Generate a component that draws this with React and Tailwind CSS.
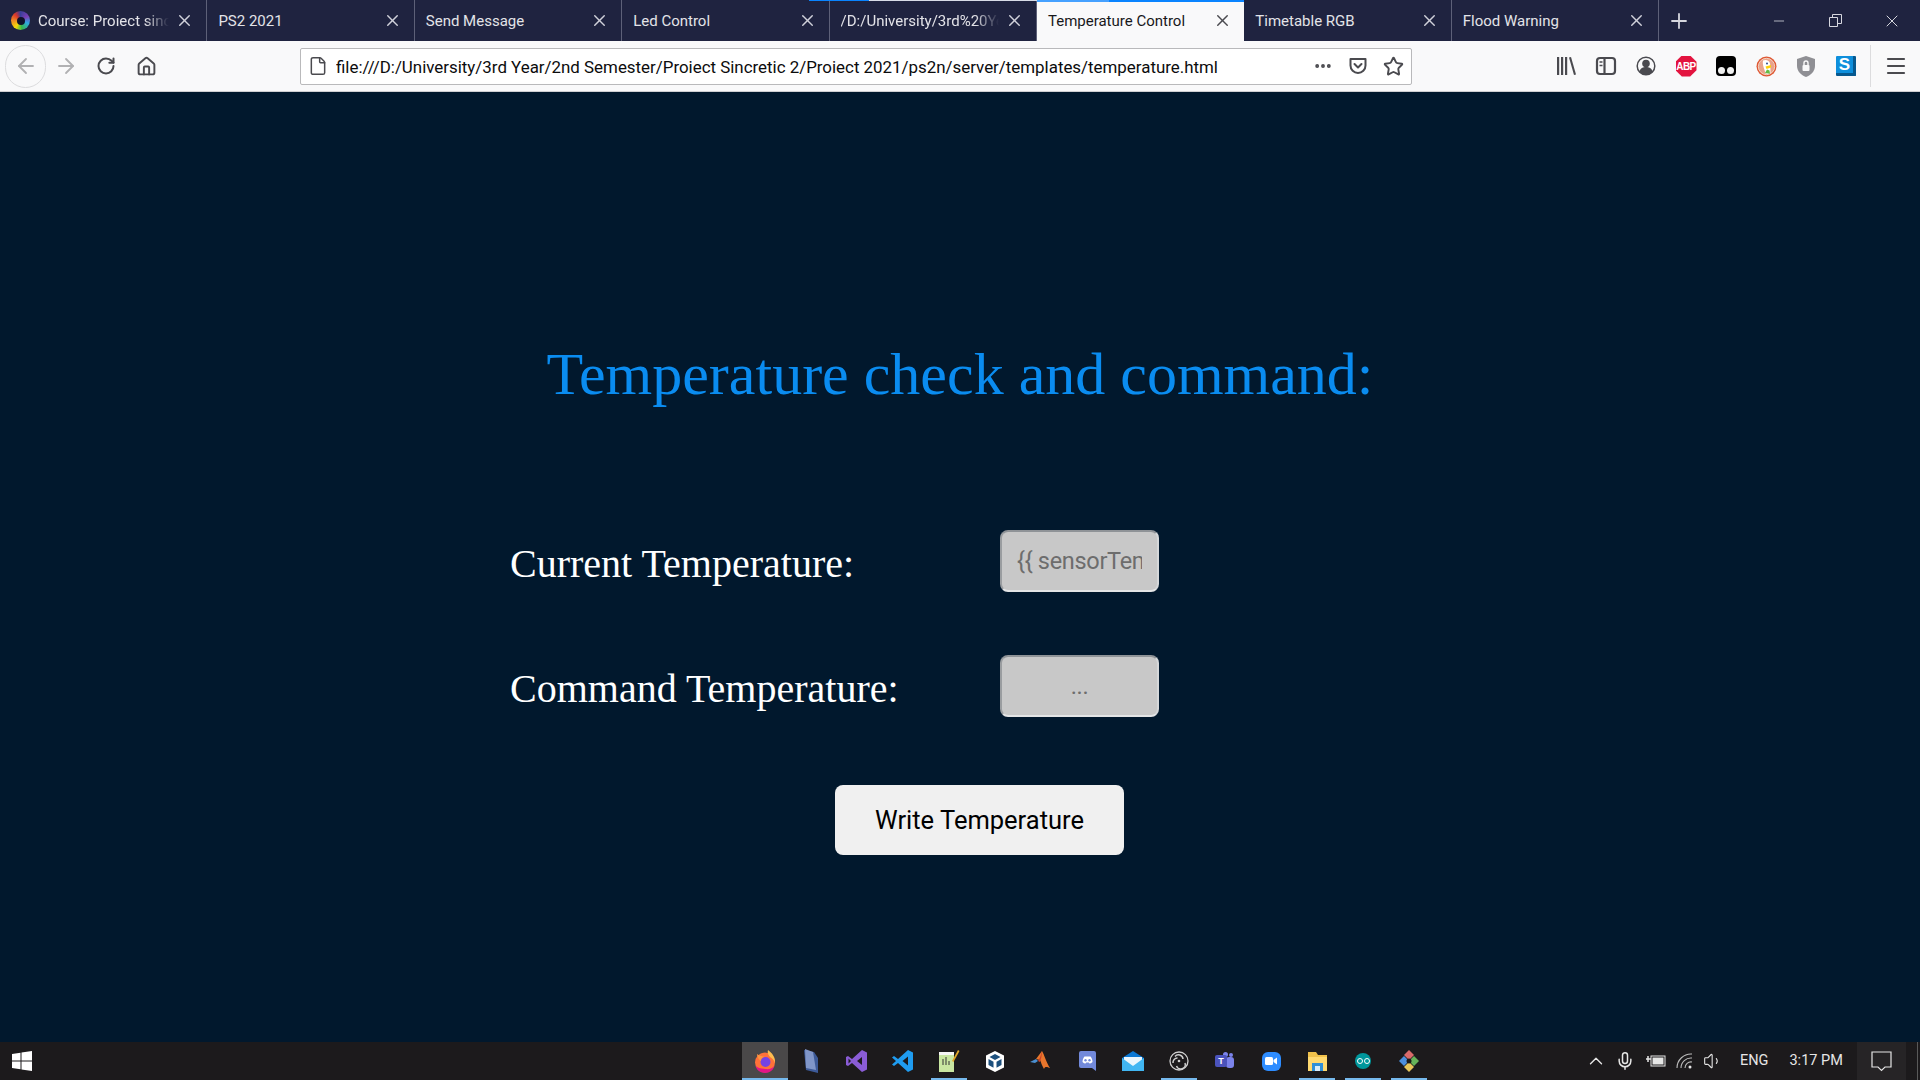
import { ArrowLeft, ArrowRight, RotateCw, Home, File, Ellipsis, Star, X, Plus, Minus, Menu, ChevronUp, Mic, Volume1 } from "lucide-react";

const uiFont = "font-['Roboto','Noto_Sans',sans-serif]";

const tabs = [
  { title: "Course: Proiect sincretic 2", icon: true },
  { title: "PS2 2021" },
  { title: "Send Message" },
  { title: "Led Control" },
  { title: "/D:/University/3rd%20Year/2nd" },
  { title: "Temperature Control", active: true },
  { title: "Timetable RGB" },
  { title: "Flood Warning" },
];

function Favicon() {
  return (
    <div className="w-[19px] h-[19px] shrink-0 mr-[8px] rounded-full flex items-center justify-center bg-[conic-gradient(#3a3f9a_0deg,#7c3fb5_60deg,#2fa8e0_110deg,#35b84a_170deg,#f5d90a_215deg,#f08a24_270deg,#d8352a_320deg,#3a3f9a_360deg)]">
      <div className="w-[8px] h-[8px] rounded-full bg-[#10132b]" />
    </div>
  );
}

function Tab({ tab, last }) {
  const long = tab.title.length > 22;
  return (
    <div className={`relative w-[207.400px] h-full flex items-center pl-[11px] pr-[12px] shrink-0 ${tab.active ? "bg-[#f9f9fa] text-[#18181a]" : "text-[#e3e3e8]"} ${!tab.active && !last ? "border-r border-[#5d6078]" : ""} ${last ? "border-r border-[#5d6078]" : ""}`}>
      {tab.icon && <Favicon />}
      <span className={`flex-1 whitespace-nowrap text-[15px] leading-none pt-[2px] ${long ? "overflow-hidden [mask-image:linear-gradient(to_left,transparent,black_24px)]" : ""}`}>{tab.title}</span>
      <X size={19} strokeWidth={1.800} className={`shrink-0 ml-[6px] ${tab.active ? "text-[#4a4a4f]" : "text-[#d0d1da]"}`} />
    </div>
  );
}

function TabStrip() {
  return (
    <div className="relative h-[41px] bg-[#1f2340] flex items-center">
      {tabs.map((t, i) => <Tab key={i} tab={t} last={i === tabs.length - 1} />)}
      <div className="w-[40px] flex justify-center shrink-0"><Plus size={24} strokeWidth={1.800} className="text-[#d6d7df]" /></div>
      <div className="flex-1 flex justify-end items-center text-[#d6d7df]">
        <div className="w-[57px] flex justify-center"><Minus size={16} strokeWidth={1.200} /></div>
        <div className="w-[57px] flex justify-center">
          <svg width="13" height="13" viewBox="0 0 13 13" fill="none" stroke="currentColor"><path d="M.5 3.500h8v9h-8zM3.500 3.500v-3h9v9h-4" /></svg>
        </div>
        <div className="w-[56px] flex justify-center"><X size={20} strokeWidth={1.200} /></div>
      </div>
      {/* loading bars along the top edge of the tabs */}
      <div className="absolute top-0 left-[809px] w-[60px] h-[1px] bg-[#0a84ff]" />
      <div className="absolute top-0 left-[869px] w-[168px] h-[1px] bg-[#d8dce8]" />
      <div className="absolute top-0 left-[1037px] w-[72px] h-[2px] bg-[#45a1ff]" />
      <div className="absolute top-0 left-[1109px] w-[135px] h-[2px] bg-[#0a84ff]" />
    </div>
  );
}

function ToolIcon({ children, w = "w-[40px]" }) {
  return <div className={`${w} flex items-center justify-center shrink-0`}>{children}</div>;
}

function Toolbar() {
  const grey = "text-[#4a4a4f]";
  return (
    <div className="h-[51px] bg-[#f9f9fa] border-b border-[#cfcfd2] flex items-center text-[14px]">
      <div className="w-[41px] h-[43px] ml-[5px] rounded-full border border-[#dcdcde] flex items-center justify-center shrink-0">
        <ArrowLeft size={24} strokeWidth={1.800} className="text-[#b1b1b3]" />
      </div>
      <ToolIcon><ArrowRight size={24} strokeWidth={1.800} className="text-[#b1b1b3]" /></ToolIcon>
      <ToolIcon><RotateCw size={20} strokeWidth={2.400} className={grey} /></ToolIcon>
      <ToolIcon><Home size={21} strokeWidth={2.200} className={grey} /></ToolIcon>
      <div className="ml-[134px] w-[1112px] h-[37px] bg-white border border-[#b9b9bb] rounded-[2px] flex items-center pl-[7px] pr-[7px] shrink-0">
        <File size={20} strokeWidth={1.800} className={`${grey} shrink-0`} />
        <span className="ml-[8px] flex-1 whitespace-nowrap overflow-hidden text-[#0c0c0d] text-[16.900px] pt-[3px]">file:///D:/University/3rd Year/2nd Semester/Proiect Sincretic 2/Proiect 2021/ps2n/server/templates/temperature.html</span>
        <Ellipsis size={20} strokeWidth={2.600} className={`${grey} mr-[15px] shrink-0`} />
        <svg width="20" height="20" viewBox="0 0 20 20" fill="none" stroke="#4a4a4f" strokeWidth="2" strokeLinejoin="round" strokeLinecap="round" className="mr-[15px] shrink-0">
          <path d="M2.500 3h15v6.500a7.500 7.500 0 0 1-15 0z" /><path d="M6.500 8l3.500 3.500L13.500 8" />
        </svg>
        <Star size={21} strokeWidth={2.200} className={`${grey} shrink-0`} />
      </div>
      <div className="ml-[134px] flex items-center">
        <ToolIcon>
          <svg width="22" height="22" viewBox="0 0 22 22" fill="#4a4a4f"><rect x="2" y="2" width="2.200" height="18" /><rect x="6" y="2" width="2.200" height="18" /><rect x="10" y="2" width="2.200" height="18" /><path d="M14 2.500l2-.5 5 17.500-2 .5z" /></svg>
        </ToolIcon>
        <ToolIcon>
          <svg width="22" height="20" viewBox="0 0 22 20" fill="none" stroke="#4a4a4f" strokeWidth="2.200"><rect x="2" y="2" width="18" height="16" rx="3" /><path d="M9.500 2v16" /><path d="M4.500 6h3M4.500 9.500h3" strokeWidth="1.500" /></svg>
        </ToolIcon>
        <ToolIcon>
          <svg width="20" height="20" viewBox="0 0 20 20"><circle cx="10" cy="10" r="8.800" fill="none" stroke="#4a4a4f" strokeWidth="1.500" /><circle cx="10" cy="7.500" r="3.800" fill="#4a4a4f" /><path d="M3.500 15.500c1-3.500 3.500-4.500 6.500-4.500s5.500 1 6.500 4.500a8 8 0 0 1-13 0z" fill="#4a4a4f" /></svg>
        </ToolIcon>
        <ToolIcon>
          <div className="w-[21px] h-[21px] bg-[#e3143f] [clip-path:polygon(30%_0,70%_0,100%_30%,100%_70%,70%_100%,30%_100%,0_70%,0_30%)] flex items-center justify-center text-white text-[10px] font-bold font-['Liberation_Sans',sans-serif] tracking-[-0.600px]">ABP</div>
        </ToolIcon>
        <ToolIcon>
          <div className="w-[20px] h-[20px] bg-black rounded-[4px] relative overflow-hidden">
            <span className="absolute left-[2px] bottom-[2px] w-[7px] h-[7px] rounded-full bg-[#f0f0f0]" />
            <span className="absolute right-[2px] bottom-[2px] w-[7px] h-[7px] rounded-full bg-[#f0f0f0]" />
          </div>
        </ToolIcon>
        <ToolIcon>
          <svg width="21" height="21" viewBox="0 0 21 21">
            <circle cx="10.500" cy="10.500" r="10" fill="#de5833" />
            <circle cx="10.500" cy="10.500" r="8.200" fill="#e9a38a" stroke="#f6e3d8" strokeWidth="0.800" />
            <path d="M7 4.500c3-1.500 6.500 0 7 3 .4 3 .5 6 .5 9.500-2 1.200-4 1.200-5 .5C9 14 6 9 7 4.500z" fill="#fff" />
            <path d="M9.500 10.500l5.500-1.500v2.500l-4.500 1.500z" fill="#fdd20a" />
            <path d="M9 17l2-3.500 2.500 1 .5 3.200z" fill="#65bc46" />
            <circle cx="11" cy="7.500" r="1" fill="#2d4f8e" />
          </svg>
        </ToolIcon>
        <ToolIcon>
          <svg width="18" height="21" viewBox="0 0 18 21"><path d="M9 0l9 3v7c0 5-4 9-9 11-5-2-9-6-9-11V3z" fill="#8f8f94" /><rect x="5.500" y="9" width="7" height="6" rx="1" fill="#f9f9fa" /><path d="M7 9V7a2 2 0 0 1 4 0v2" fill="none" stroke="#f9f9fa" strokeWidth="1.400" /></svg>
        </ToolIcon>
        <ToolIcon>
          <div className="w-[20px] h-[20px] bg-[#0e8fdc] rounded-[1px] border-b-[3px] border-r-[3px] border-[#07598f] flex items-center justify-center text-white text-[17px] font-bold font-['Liberation_Sans',sans-serif]">S</div>
        </ToolIcon>
      </div>
      <div className="ml-[4px] w-px h-[42px] bg-[#dcdcde] shrink-0" />
      <div className="flex-1 flex justify-center"><Menu size={24} strokeWidth={2.200} className={grey} /></div>
    </div>
  );
}

function Row({ label, value, center }) {
  return (
    <div className="flex items-center h-[62px]">
      <label className="w-[490px] text-[40px] leading-none text-white relative top-[3px]">{label}</label>
      <input
        readOnly
        value={value}
        className={`w-[159px] h-[62px] bg-[#c8c8c8] rounded-[8px] border-2 border-t-[#8f9397] border-l-[#9a9da0] border-r-[#d5d7d9] border-b-[#e4e5e6] text-[23.500px] tracking-[-0.300px] text-[#6d6d6d] outline-none ${uiFont} ${center ? "text-center" : "pl-[15px] pr-[15px]"}`}
      />
    </div>
  );
}

function Page() {
  return (
    <main className="h-[950px] bg-[#01182d] font-['Liberation_Serif',serif] pt-[247px]">
      <h1 className="text-center text-[60px] leading-[70px] text-[#0a8cf0]">Temperature check and command:</h1>
      <div className="w-[900px] mx-auto mt-[121px]">
        <Row label="Current Temperature:" value="{{ sensorTemp }}" />
        <div className="mt-[63px]"><Row label="Command Temperature:" value="..." center /></div>
        <button className={`block ml-[325px] mt-[68px] w-[289px] h-[70px] bg-[#f0f0f0] rounded-[8px] text-black text-[25.500px] ${uiFont}`}>Write Temperature</button>
      </div>
    </main>
  );
}

const taskIcons = [
  { key: "firefox", state: "hover", icon: (
    <svg width="24" height="24" viewBox="0 0 24 24">
      <circle cx="12" cy="13.500" r="10" fill="#ff7139" />
      <path d="M2.500 17a10 10 0 0 0 19 0c-3 3-6 3.500-9 3-4-.5-8-1-10-3z" fill="#e31587" />
      <circle cx="12.500" cy="13" r="5" fill="#7542e5" />
      <path d="M15 1c4 3 7.500 7 7 13-1-3-3-5-5-6-1-2-3-3-2-7z" fill="#ffbd4f" />
      <path d="M4 5c2 2 5 2 8 3-3 0-4 2-4 4-2-1-4-4-4-7z" fill="#ff9640" />
    </svg>
  ) },
  { key: "file", icon: <svg width="14" height="24" viewBox="0 0 14 24"><path d="M0 1l10 2 4 6v15L2 21z" fill="#3d5a98" /><path d="M1 0l8 3 3 18-10-2z" fill="#8096c9" /></svg> },
  { key: "vs", icon: <svg width="22" height="24" viewBox="0 0 22 24"><path d="M16 1l5 2.500v17L16 23 6 14l-4 3-2-1V8l2-1 4 3z" fill="#8a5cd6" /><path d="M16 8l-5 4 5 4zM2.500 9.500v5L5 12z" fill="#1c1a1c" /></svg> },
  { key: "vscode", icon: <svg width="22" height="24" viewBox="0 0 22 24"><path d="M16 1l5 2.500v17L16 23 6 14l-4 3-2-1.500L4 12 0 8.500 2 7l4 3z" fill="#1f9cf0" /><path d="M16 7.500L10.500 12l5.500 4.500z" fill="#1c1a1c" /></svg> },
  { key: "notepad", state: "open", icon: <svg width="22" height="24" viewBox="0 0 22 24"><path d="M1 3h15v20H1z" fill="#c9e6a1" /><path d="M1 3h15v3H1z" fill="#f5f5f5" /><path d="M5 16V10M8 16V8M11 16v-4" stroke="#333" strokeWidth="1" /><path d="M14 12l6-11 1.500 1-6 11z" fill="#e0a526" /></svg> },
  { key: "vbox", icon: <svg width="20" height="23" viewBox="0 0 20 23"><path d="M10 1l9 4.500v12L10 22l-9-4.500v-12z" fill="#fff" /><path d="M10 4l5.500 3-5.500 3-5.500-3zM3.500 9l5 2.800v6L3.500 15zM16.500 9l-5 2.800v6l5-2.800z" fill="#1c4f7d" /></svg> },
  { key: "matlab", icon: <svg width="22" height="20" viewBox="0 0 22 20"><path d="M0 11l6-3 2 2-3 2z" fill="#4b8fd0" /><path d="M6 8l6-8c2 3 5 13 8 17-3-1-5-2-6 1-2-3-3-7-4-9z" fill="#e8762c" /><path d="M12 0c-1 4-2 7-4 10l2 1c1-3 2-7 2-11z" fill="#c9412b" /></svg> },
  { key: "discord", icon: (
    <svg width="17" height="20" viewBox="0 0 17 20">
      <path d="M2 0h13a2 2 0 0 1 2 2v18l-4-3H2a2 2 0 0 1-2-2V2a2 2 0 0 1 2-2z" fill="#7289da" />
      <path d="M3.500 11c0-2.500 1-4.500 2-5.500h6c1 1 2 3 2 5.500-1 1-2 1.500-3 1.500l-.7-1H7.200l-.7 1c-1 0-2-.5-3-1.500z" fill="#fff" />
      <circle cx="6.500" cy="9.300" r="1.200" fill="#7289da" /><circle cx="10.500" cy="9.300" r="1.200" fill="#7289da" />
    </svg>
  ) },
  { key: "mail", icon: <svg width="22" height="20" viewBox="0 0 22 20"><path d="M0 7l11-7 11 7v13H0z" fill="#0a78d4" /><path d="M2 6h18v6l-9 4-9-4z" fill="#eaf6fd" /><path d="M0 7l11 8 11-8v13H0z" fill="#41b6f2" /></svg> },
  { key: "obs", state: "open", icon: (
    <svg width="20" height="20" viewBox="0 0 20 20" fill="none" stroke="#d0d0d0">
      <circle cx="10" cy="10" r="9" strokeWidth="1.300" />
      <path d="M6 5.500a4.500 4.500 0 0 1 8 2.500M16 12a4.500 4.500 0 0 1-8.500 3M4 12a4.500 4.500 0 0 1 4.500-5" strokeWidth="1.500" />
      <circle cx="10" cy="10" r="1.300" fill="#d0d0d0" stroke="none" />
    </svg>
  ) },
  { key: "teams", icon: (
    <div className="relative w-[20px] h-[17px]">
      <span className="absolute right-[1px] top-[4px] w-[8px] h-[11px] rounded-[3px] bg-[#7b83eb]" />
      <span className="absolute right-[2px] top-0 w-[4px] h-[4px] rounded-full bg-[#7b83eb]" />
      <span className="absolute left-[8px] -top-[1px] w-[5px] h-[5px] rounded-full bg-[#7b83eb]" />
      <span className="absolute left-0 top-[2px] w-[12px] h-[12px] rounded-[2px] bg-[#4b53bc] text-white text-[9px] leading-[12px] text-center font-bold font-['Liberation_Sans',sans-serif]">T</span>
    </div>
  ) },
  { key: "zoom", icon: <div className="w-[19px] h-[19px] rounded-[6px] bg-[#2d8cff] flex items-center justify-center"><svg width="12" height="8" viewBox="0 0 12 8" fill="#fff"><rect width="8" height="8" rx="1.500" /><path d="M8.500 3L12 .5v7L8.500 5z" /></svg></div> },
  { key: "explorer", state: "open", icon: <svg width="19" height="19" viewBox="0 0 19 19"><path d="M0 0h8l2 3h9v16H0z" fill="#f0c14b" /><path d="M0 5h19v14H0z" fill="#ffd970" /><path d="M4 11h11v8H4z" fill="#2f8fd8" /><path d="M7 14h5v5H7z" fill="#d7ecfb" /></svg> },
  { key: "arduino", state: "open", icon: <div className="w-[16px] h-[16px] rounded-full bg-[#00979c] flex items-center justify-center gap-[1px]"><span className="w-[6px] h-[6px] rounded-full border border-white" /><span className="w-[6px] h-[6px] rounded-full border border-white" /></div> },
  { key: "gitkraken", state: "open", icon: <svg width="20" height="22" viewBox="0 0 20 22"><path d="M10 0l5 5-5 5-5-5z" fill="#d96a6a" /><path d="M15 6l5 5-5 5-5-5z" fill="#66b35a" /><path d="M5 6l5 5-5 5-5-5z" fill="#4d8fdc" /><path d="M10 12l5 5-5 5-5-5z" fill="#e8c65a" /><circle cx="10" cy="11" r="2.500" fill="#1a1a1a" /></svg> },
];

function TaskIcon({ item }) {
  const hover = item.state === "hover";
  const open = item.state === "open" || hover;
  return (
    <div className={`relative w-[46px] h-full flex items-center justify-center shrink-0 ${hover ? "bg-[#4a4849]" : ""}`}>
      {item.icon}
      {open && <span className={`absolute bottom-0 h-[2px] bg-[#76b9ed] ${hover ? "inset-x-0" : "inset-x-[5px]"}`} />}
    </div>
  );
}

function Taskbar() {
  return (
    <div className={`h-[38px] bg-[#1c1a1c] flex items-center text-[#e6e6e6] ${uiFont}`}>
      <div className="ml-[12px] shrink-0">
        <svg width="20" height="20" viewBox="0 0 20 20" fill="#fff"><path d="M0 3l8.500-1.200v7.700H0zM9.500 1.600L20 0v9.500H9.500zM0 10.500h8.500v7.700L0 17zM9.500 10.500H20V20L9.500 18.400z" /></svg>
      </div>
      <div className="ml-[710px] h-full flex items-center">
        {taskIcons.map(t => <TaskIcon key={t.key} item={t} />)}
      </div>
      <div className="ml-[153px] h-full flex items-center">
        <ChevronUp size={22} strokeWidth={1.500} className="text-[#e6e6e6]" />
        <Mic size={20} strokeWidth={1.800} className="ml-[8px]" />
        <svg width="20" height="14" viewBox="0 0 20 14" className="ml-[11px]" fill="none" stroke="#e6e6e6"><rect x="5" y="2" width="14" height="10" /><rect x="7" y="4" width="10" height="6" fill="#e6e6e6" /><path d="M0 5h5M2 2v6" strokeWidth="1.500" /></svg>
        <svg width="20" height="18" viewBox="0 0 20 18" className="ml-[9px]" fill="none" stroke="#bdbdbd" strokeWidth="1.100"><path d="M2 16a14 14 0 0 1 15-14M6 16a10 10 0 0 1 11-10M10 16a6 6 0 0 1 7-6" /><circle cx="15" cy="15" r="1.500" fill="#e6e6e6" stroke="none" /></svg>
        <Volume1 size={20} strokeWidth={1.300} className="ml-[8px]" />
        <span className="ml-[17px] text-[14.500px]">ENG</span>
        <span className="ml-[21px] text-[14.500px] whitespace-nowrap">3:17 PM</span>
      </div>
      <div className="ml-[14px] w-[49px] h-full bg-[#262426] flex items-center justify-center shrink-0">
        <svg width="21" height="21" viewBox="0 0 21 21" fill="none" stroke="#e6e6e6" strokeWidth="1.200"><path d="M1 1h19v15h-6l-3.500 3.500L7 16H1z" /></svg>
      </div>
      <div className="flex-1 flex justify-end h-full"><span className="w-px h-full bg-[#5a5a5a] mr-[2px]" /></div>
    </div>
  );
}

export default function App() {
  return (
    <div className={`w-[1920px] h-[1080px] overflow-hidden ${uiFont}`}>
      <TabStrip />
      <Toolbar />
      <Page />
      <Taskbar />
    </div>
  );
}
